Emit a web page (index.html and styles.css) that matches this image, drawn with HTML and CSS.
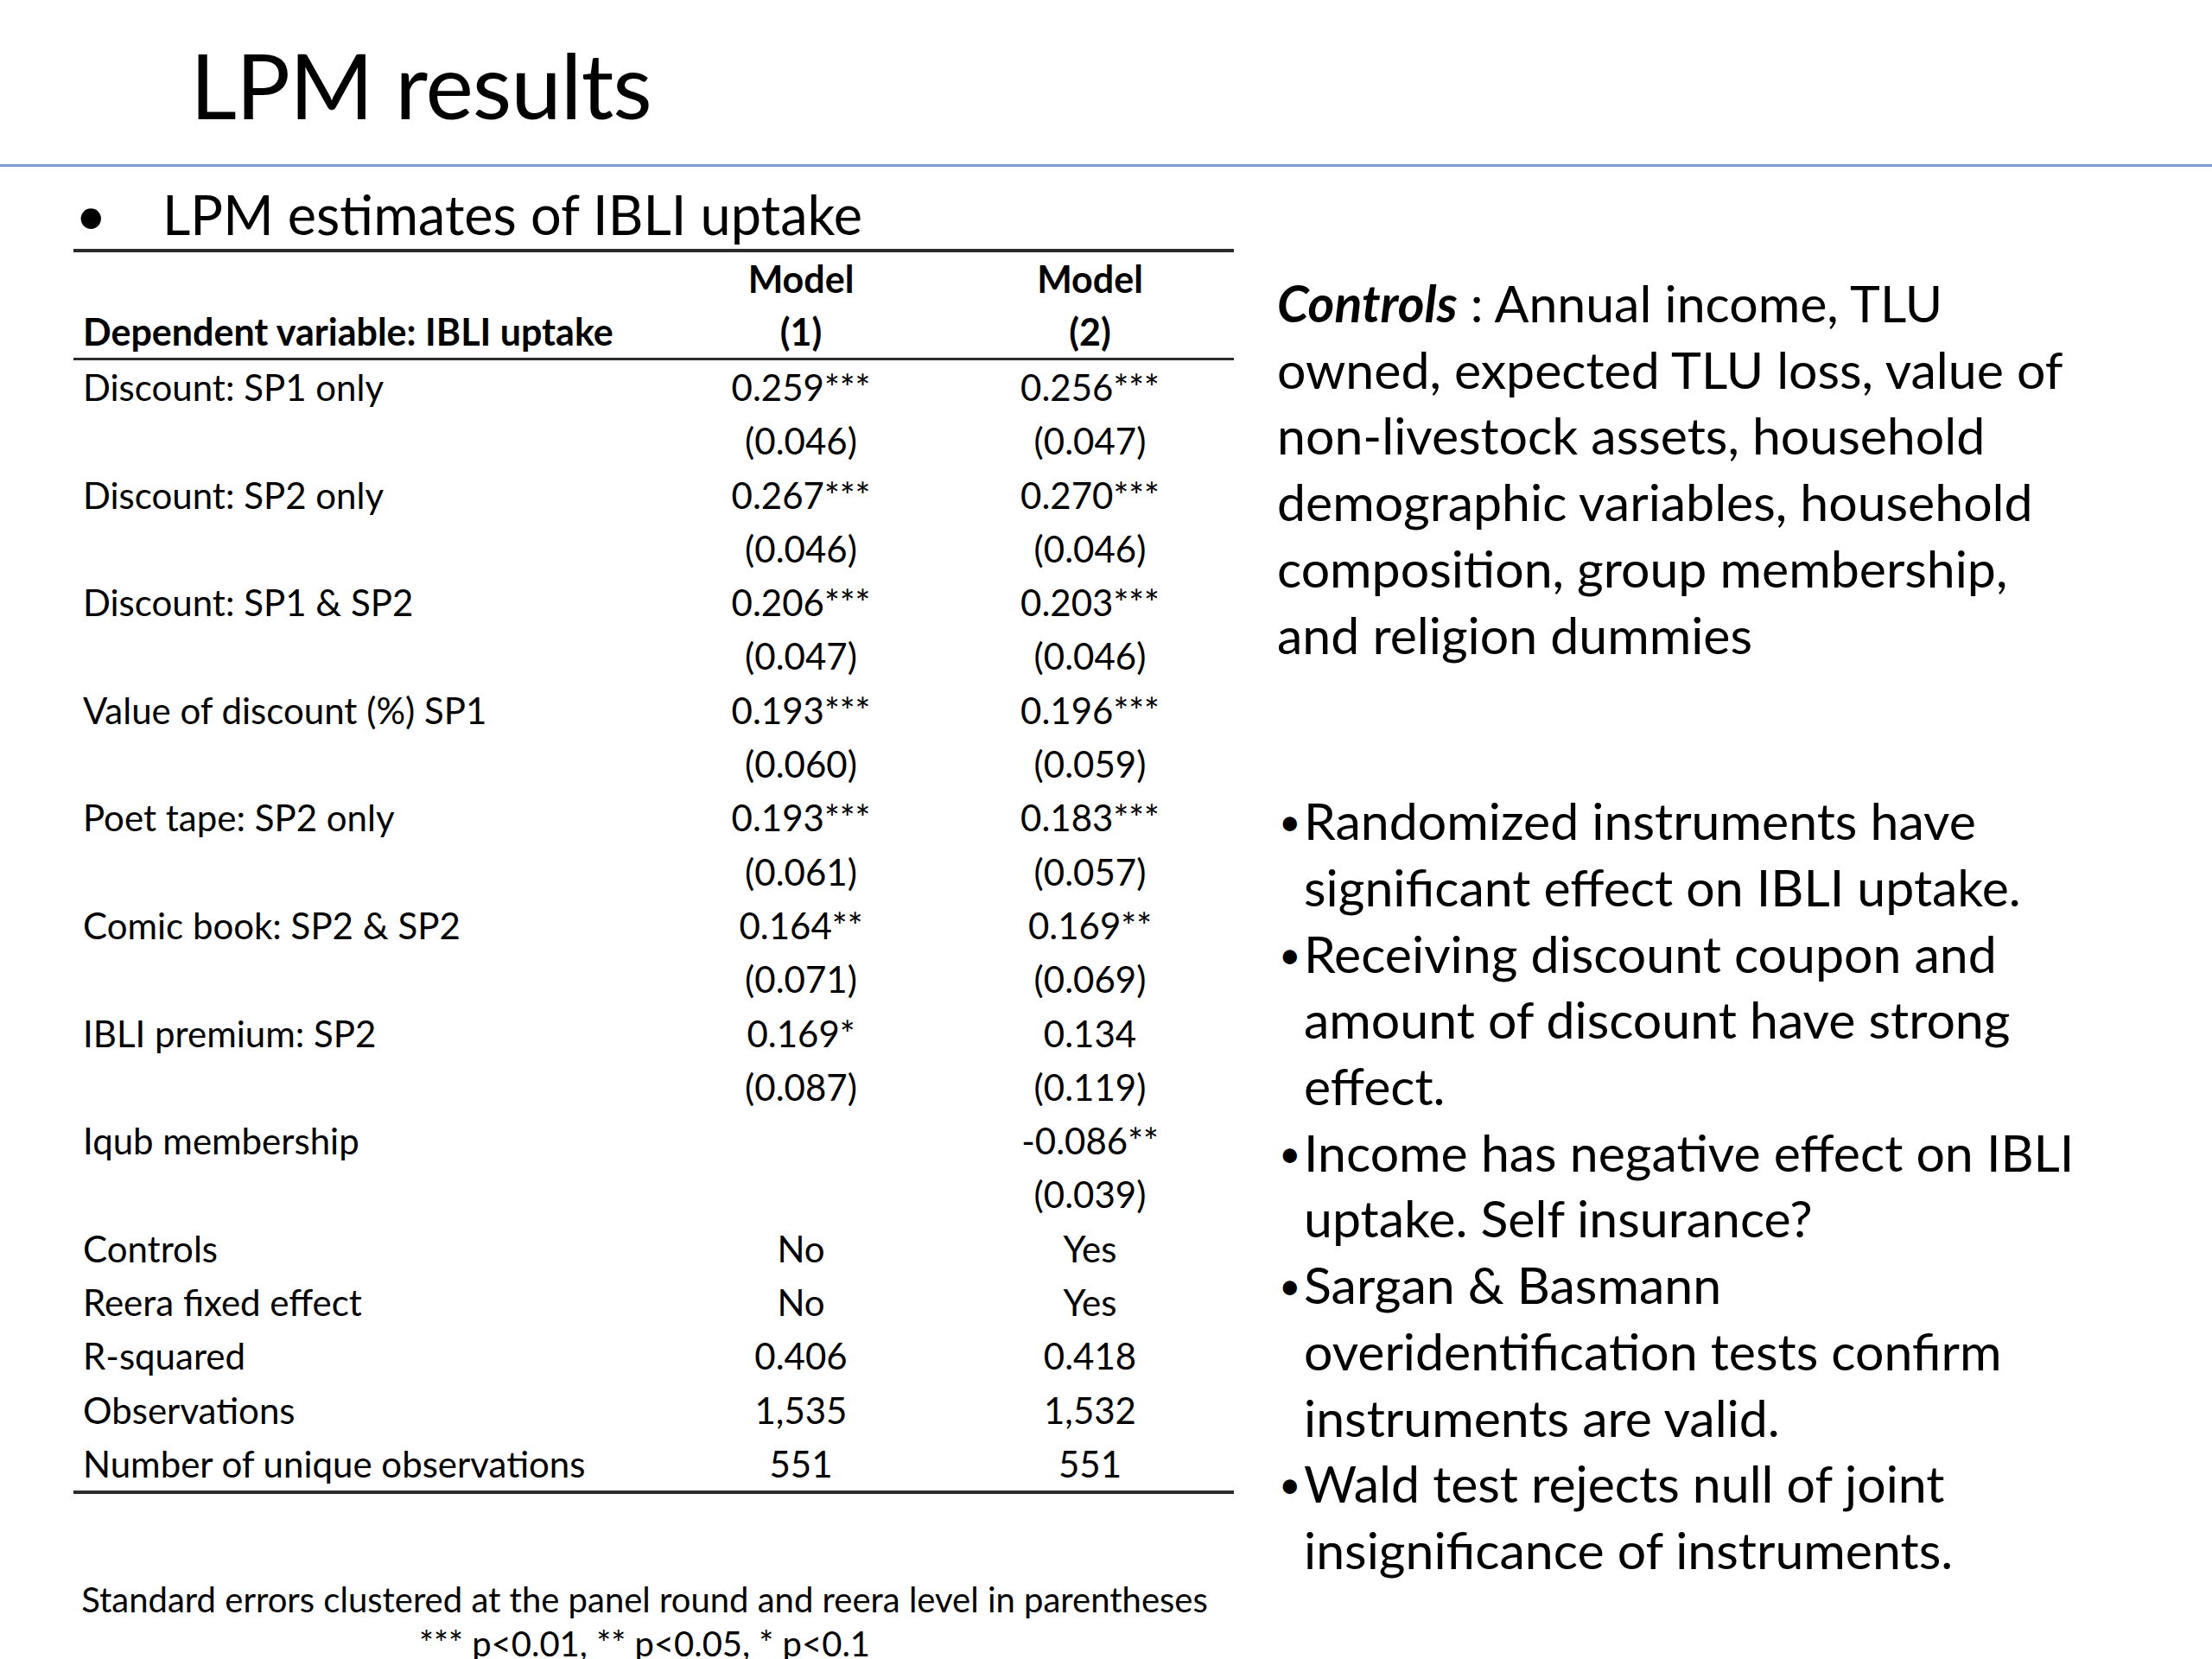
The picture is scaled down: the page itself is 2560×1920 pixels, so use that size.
FILE: index.html
```html
<!DOCTYPE html>
<html lang="en">
<head>
<meta charset="utf-8">
<title>LPM results</title>
<link rel="stylesheet" href="styles.css">
</head>
<body>
<div class="slide">
  <header class="slide-header">
    <h1 class="title">LPM results</h1>
  </header>
  <main class="content">
    <section class="left">
      <div class="subhead"><span class="sub-bullet">•</span><span>LPM estimates of IBLI uptake</span></div>
      <table class="results">
        <thead>
          <tr><th class="lbl"></th><th>Model</th><th>Model</th></tr>
          <tr class="hdr-last"><th class="lbl">Dependent variable: IBLI uptake</th><th>(1)</th><th>(2)</th></tr>
        </thead>
        <tbody>
          <tr><td class="lbl">Discount: SP1 only</td><td>0.259***</td><td>0.256***</td></tr>
          <tr><td class="lbl"></td><td>(0.046)</td><td>(0.047)</td></tr>
          <tr><td class="lbl">Discount: SP2 only</td><td>0.267***</td><td>0.270***</td></tr>
          <tr><td class="lbl"></td><td>(0.046)</td><td>(0.046)</td></tr>
          <tr><td class="lbl">Discount: SP1 &amp; SP2</td><td>0.206***</td><td>0.203***</td></tr>
          <tr><td class="lbl"></td><td>(0.047)</td><td>(0.046)</td></tr>
          <tr><td class="lbl">Value of discount (%) SP1</td><td>0.193***</td><td>0.196***</td></tr>
          <tr><td class="lbl"></td><td>(0.060)</td><td>(0.059)</td></tr>
          <tr><td class="lbl">Poet tape: SP2 only</td><td>0.193***</td><td>0.183***</td></tr>
          <tr><td class="lbl"></td><td>(0.061)</td><td>(0.057)</td></tr>
          <tr><td class="lbl">Comic book: SP2 &amp; SP2</td><td>0.164**</td><td>0.169**</td></tr>
          <tr><td class="lbl"></td><td>(0.071)</td><td>(0.069)</td></tr>
          <tr><td class="lbl">IBLI premium: SP2</td><td>0.169*</td><td>0.134</td></tr>
          <tr><td class="lbl"></td><td>(0.087)</td><td>(0.119)</td></tr>
          <tr><td class="lbl">Iqub membership</td><td></td><td>-0.086**</td></tr>
          <tr><td class="lbl"></td><td></td><td>(0.039)</td></tr>
          <tr><td class="lbl">Controls</td><td>No</td><td>Yes</td></tr>
          <tr><td class="lbl">Reera fixed effect</td><td>No</td><td>Yes</td></tr>
          <tr><td class="lbl">R-squared</td><td>0.406</td><td>0.418</td></tr>
          <tr><td class="lbl">Observations</td><td>1,535</td><td>1,532</td></tr>
          <tr class="last"><td class="lbl">Number of unique observations</td><td>551</td><td>551</td></tr>
        </tbody>
      </table>
      <div class="footnote">
        <p>Standard errors clustered at the panel round and reera level in parentheses</p>
        <p>*** p&lt;0.01, ** p&lt;0.05, * p&lt;0.1</p>
      </div>
    </section>
    <section class="right">
      <p class="controls"><em class="controls-key">Controls</em> : Annual income, TLU<br>owned, expected TLU loss, value of<br>non-livestock assets, household<br>demographic variables, household<br>composition, group membership,<br>and religion dummies</p>
      <ul class="points">
        <li>Randomized instruments have significant effect on IBLI uptake.</li>
        <li>Receiving discount coupon and amount of discount have strong effect.</li>
        <li>Income has negative effect on IBLI uptake. Self insurance?</li>
        <li>Sargan &amp; Basmann overidentification tests confirm instruments are valid.</li>
        <li>Wald test rejects null of joint insignificance of instruments.</li>
      </ul>
    </section>
  </main>
</div>
</body>
</html>
```

FILE: styles.css
```css
html, body {
  margin: 0;
  padding: 0;
  background: #ffffff;
}

body {
  font-family: "Lato", "Open Sans", sans-serif;
  color: #000;
}

.slide {
  width: 2560px;
  height: 1920px;
  overflow: hidden;
  background: #ffffff;
}

.slide-header {
  height: 193px;
  border-bottom: 3px solid #7c9fd2;
  box-sizing: border-box;
  padding-left: 220px;
  padding-top: 36px;
}

.title {
  margin: 0;
  font-weight: 400;
  font-size: 105px;
  line-height: 122px;
  letter-spacing: -1px;
}

.content {
  display: flex;
  padding-left: 85px;
}

.left {
  width: 1343px;
  flex: none;
}

.subhead {
  margin-top: 17px;
  display: flex;
  font-size: 63px;
  line-height: 76px;
}

.sub-bullet {
  width: 103px;
  padding-left: 2px;
  box-sizing: border-box;
}

.results {
  margin-top: 2px;
  width: 1343px;
  border-collapse: collapse;
  table-layout: fixed;
  font-size: 42px;
}

.results th,
.results td {
  padding: 0;
  text-align: center;
  white-space: nowrap;
  font-weight: 400;
}

.results th.lbl,
.results td.lbl {
  text-align: left;
  padding-left: 11px;
  width: 663px;
}

.results th:nth-child(2),
.results td:nth-child(2) { width: 336px; }

.results th:nth-child(3),
.results td:nth-child(3) { width: 333px; }

.results thead tr {
  height: 61px;
  line-height: 61px;
}

.results thead tr:first-child {
  border-top: 4px solid #2b2b2b;
}

.results thead th {
  font-weight: 700;
  font-size: 43px;
}

.results .hdr-last {
  border-bottom: 3px solid #2b2b2b;
}

.results tbody tr {
  height: 62.3px;
  line-height: 62.3px;
}

.results tbody tr.last {
  border-bottom: 4px solid #2b2b2b;
}

.footnote {
  margin-top: 97px;
  width: 1322px;
  text-align: center;
  font-size: 40px;
  line-height: 51px;
  white-space: nowrap;
}

.footnote p {
  margin: 0;
}

.right {
  margin-left: 50px;
  width: 1020px;
  flex: none;
  font-size: 59px;
  line-height: 76.7px;
}

.controls {
  margin: 120px 0 0;
}

.controls-key {
  font-weight: 700;
  font-style: italic;
}

.points {
  list-style: none;
  margin: 139px 0 0;
  padding: 0;
  width: 968px;
}

.points li {
  position: relative;
  padding-left: 31px;
}

.points li::before {
  content: "•";
  position: absolute;
  left: 2px;
  top: 0;
  font-size: 44px;
}
```
